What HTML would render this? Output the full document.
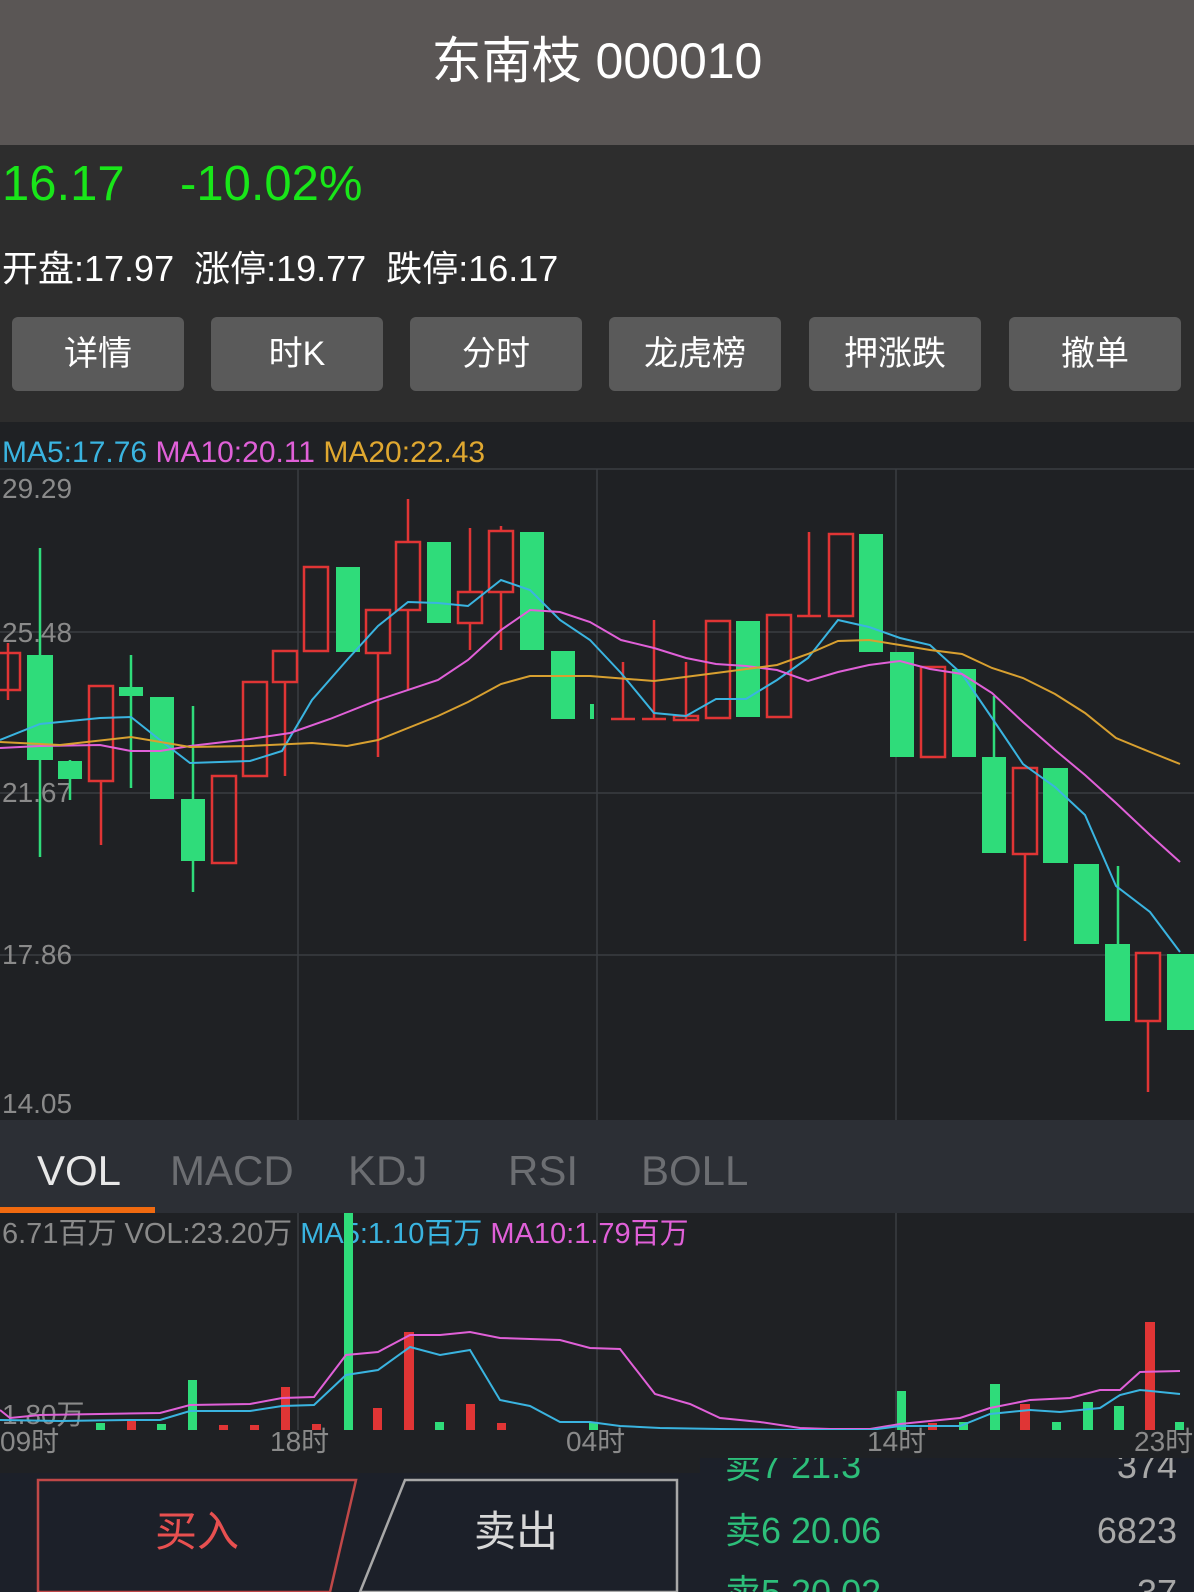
<!DOCTYPE html>
<html><head><meta charset="utf-8"><style>
*{margin:0;padding:0;box-sizing:border-box}
body{width:1194px;height:1592px;background:#2d2d2d;font-family:"Liberation Sans","Noto Sans CJK SC",sans-serif;overflow:hidden;position:relative}
.hdr{position:absolute;left:0;top:0;width:1194px;height:145px;background:#5a5655;color:#fff;font-size:50px;text-align:center;line-height:122px}
.t{position:absolute;white-space:nowrap}
.btn{position:absolute;top:317px;width:172px;height:74px;background:#5a5a5a;border-radius:6px;color:#fff;font-size:34px;text-align:center;line-height:74px}
</style></head><body>
<div class="hdr">东南枝 000010</div>
<div class="t" style="left:2px;top:156px;font-size:49px;color:#19e619">16.17</div>
<div class="t" style="left:180px;top:156px;font-size:49px;color:#19e619">-10.02%</div>
<div class="t" style="left:2px;top:240px;font-size:36px;color:#fff">开盘:17.97&nbsp; 涨停:19.77&nbsp; 跌停:16.17</div>
<div class="btn" style="left:12px">详情</div>
<div class="btn" style="left:211px">时K</div>
<div class="btn" style="left:410px">分时</div>
<div class="btn" style="left:609px">龙虎榜</div>
<div class="btn" style="left:809px">押涨跌</div>
<div class="btn" style="left:1009px">撤单</div>

<svg style="position:absolute;left:0;top:422px" width="1194" height="1170" viewBox="0 422 1194 1170" font-family="Liberation Sans, Noto Sans CJK SC, sans-serif">
<defs><clipPath id="bp"><rect x="0" y="1458" width="1194" height="134"/></clipPath></defs>
<rect x="0" y="422" width="1194" height="698" fill="#1f2124"/>
<rect x="0" y="1120" width="1194" height="93" fill="#2c2f35"/>
<rect x="0" y="1213" width="1194" height="260" fill="#1f2124"/>
<g stroke="#3a3d42" stroke-width="1.5">
<line x1="0" y1="469" x2="1194" y2="469"/><line x1="0" y1="632" x2="1194" y2="632"/><line x1="0" y1="793" x2="1194" y2="793"/><line x1="0" y1="955" x2="1194" y2="955"/>
<line x1="298" y1="469" x2="298" y2="1120"/><line x1="597" y1="469" x2="597" y2="1120"/><line x1="896" y1="469" x2="896" y2="1120"/>
<line x1="298" y1="1213" x2="298" y2="1430"/><line x1="597" y1="1213" x2="597" y2="1430"/><line x1="896" y1="1213" x2="896" y2="1430"/>
</g>
<text x="2" y="462" font-size="30"><tspan fill="#3ab4e0">MA5:17.76 </tspan><tspan fill="#e060d8">MA10:20.11 </tspan><tspan fill="#e0a830">MA20:22.43</tspan></text>
<g fill="#8a8a8a" font-size="28"><text x="2" y="498">29.29</text><text x="2" y="642">25.48</text><text x="2" y="802">21.67</text><text x="2" y="964">17.86</text><text x="2" y="1113">14.05</text></g>
<g stroke-width="2.5">
<line x1="8" y1="643" x2="8" y2="700" stroke="#e03535"/><rect x="-4" y="653" width="24" height="37" fill="none" stroke="#e03535"/>
<line x1="40" y1="548" x2="40" y2="857" stroke="#2fdc7a"/><rect x="27" y="655" width="26" height="105" fill="#2fdc7a"/>
<line x1="70" y1="760" x2="70" y2="800" stroke="#2fdc7a"/><rect x="58" y="761" width="24" height="18" fill="#2fdc7a"/>
<line x1="101" y1="686" x2="101" y2="845" stroke="#e03535"/><rect x="89" y="686" width="24" height="95" fill="#1f2124" stroke="#e03535"/>
<line x1="131" y1="655" x2="131" y2="788" stroke="#2fdc7a"/><rect x="119" y="687" width="24" height="9" fill="#2fdc7a"/>
<rect x="150" y="697" width="24" height="102" fill="#2fdc7a"/>
<line x1="193" y1="706" x2="193" y2="892" stroke="#2fdc7a"/><rect x="181" y="799" width="24" height="62" fill="#2fdc7a"/>
<rect x="212" y="776" width="24" height="87" fill="none" stroke="#e03535"/>
<rect x="243" y="682" width="24" height="94" fill="none" stroke="#e03535"/>
<line x1="285" y1="650" x2="285" y2="776" stroke="#e03535"/><rect x="273" y="651" width="24" height="31" fill="#1f2124" stroke="#e03535"/>
<rect x="304" y="567" width="24" height="84" fill="none" stroke="#e03535"/>
<rect x="336" y="567" width="24" height="85" fill="#2fdc7a"/>
<line x1="378" y1="610" x2="378" y2="757" stroke="#e03535"/><rect x="366" y="610" width="24" height="43" fill="#1f2124" stroke="#e03535"/>
<line x1="408" y1="499" x2="408" y2="690" stroke="#e03535"/><rect x="396" y="542" width="24" height="68" fill="#1f2124" stroke="#e03535"/>
<rect x="427" y="542" width="24" height="81" fill="#2fdc7a"/>
<line x1="470" y1="528" x2="470" y2="650" stroke="#e03535"/><rect x="458" y="592" width="24" height="31" fill="#1f2124" stroke="#e03535"/>
<line x1="501" y1="526" x2="501" y2="650" stroke="#e03535"/><rect x="489" y="531" width="24" height="61" fill="#1f2124" stroke="#e03535"/>
<rect x="520" y="532" width="24" height="118" fill="#2fdc7a"/>
<rect x="551" y="651" width="24" height="68" fill="#2fdc7a"/>
<rect x="590" y="704" width="4" height="15" fill="#2fdc7a"/>
<line x1="623" y1="662" x2="623" y2="719" stroke="#e03535"/><line x1="611" y1="719" x2="635" y2="719" stroke="#e03535"/>
<line x1="654" y1="620" x2="654" y2="719" stroke="#e03535"/><line x1="642" y1="719" x2="666" y2="719" stroke="#e03535"/>
<line x1="686" y1="662" x2="686" y2="720" stroke="#e03535"/><rect x="674" y="716" width="24" height="4" fill="none" stroke="#e03535"/>
<rect x="706" y="621" width="24" height="97" fill="none" stroke="#e03535"/>
<rect x="736" y="621" width="24" height="96" fill="#2fdc7a"/>
<rect x="767" y="615" width="24" height="102" fill="none" stroke="#e03535"/>
<line x1="809" y1="532" x2="809" y2="616" stroke="#e03535"/><line x1="797" y1="616" x2="821" y2="616" stroke="#e03535"/>
<rect x="829" y="534" width="24" height="82" fill="none" stroke="#e03535"/>
<rect x="859" y="534" width="24" height="118" fill="#2fdc7a"/>
<rect x="890" y="652" width="24" height="105" fill="#2fdc7a"/>
<rect x="921" y="667" width="24" height="90" fill="none" stroke="#e03535"/>
<rect x="952" y="669" width="24" height="88" fill="#2fdc7a"/>
<line x1="994" y1="696" x2="994" y2="757" stroke="#2fdc7a"/><rect x="982" y="757" width="24" height="96" fill="#2fdc7a"/>
<line x1="1025" y1="768" x2="1025" y2="941" stroke="#e03535"/><rect x="1013" y="768" width="24" height="86" fill="#1f2124" stroke="#e03535"/>
<rect x="1043" y="768" width="25" height="95" fill="#2fdc7a"/>
<rect x="1074" y="864" width="25" height="80" fill="#2fdc7a"/>
<line x1="1118" y1="866" x2="1118" y2="944" stroke="#2fdc7a"/><rect x="1105" y="944" width="25" height="77" fill="#2fdc7a"/>
<line x1="1148" y1="1021" x2="1148" y2="1092" stroke="#e03535"/><rect x="1136" y="953" width="24" height="68" fill="#1f2124" stroke="#e03535"/>
<rect x="1167" y="954" width="27" height="76" fill="#2fdc7a"/>
</g>
<polyline fill="none" stroke="#3ab4e0" stroke-width="2" points="0,740 40,724 100,718 131,717 160,740 190,763 250,761 282,751 312,700 347,660 378,626 408,602 438,603 468,606 501,580 530,590 560,620 590,640 621,673 654,713 686,716 716,699 746,699 777,680 808,658 838,620 869,627 900,638 930,645 962,674 992,718 1023,764 1055,787 1085,815 1116,886 1150,912 1180,952"/>
<polyline fill="none" stroke="#e060d8" stroke-width="2" points="0,748 40,746 100,745 131,751 160,751 190,746 250,739 290,733 330,719 378,700 438,680 468,660 501,630 530,610 560,612 590,622 621,640 654,648 686,658 716,664 746,666 777,670 808,681 838,672 869,665 900,661 930,669 962,674 992,693 1023,722 1055,750 1085,775 1116,803 1150,835 1180,862"/>
<polyline fill="none" stroke="#d8a030" stroke-width="2" points="0,742 60,745 131,737 190,747 250,746 312,743 347,746 378,740 438,716 468,702 501,684 530,676 590,676 654,681 716,673 777,665 808,654 838,641 869,640 900,645 930,650 962,654 992,668 1023,678 1055,694 1085,713 1116,738 1150,752 1180,764"/>

<text x="37" y="1185" font-size="42" fill="#e8e8e8">VOL</text>
<g font-size="42" fill="#6c6e72"><text x="170" y="1185">MACD</text><text x="348" y="1185">KDJ</text><text x="508" y="1185">RSI</text><text x="641" y="1185">BOLL</text></g>
<rect x="0" y="1207" width="155" height="6" fill="#f06a10"/>
<text x="2" y="1243" font-size="29"><tspan fill="#8a8a8a">6.71百万 VOL:23.20万 </tspan><tspan fill="#3ab4e0">MA5:1.10百万 </tspan><tspan fill="#e060d8">MA10:1.79百万</tspan></text>
<text x="2" y="1424" font-size="28" fill="#8a8a8a">1.80万</text>
<g>
<rect x="344" y="1213" width="9" height="217" fill="#2fdc7a"/>
<rect x="188" y="1380" width="9" height="50" fill="#2fdc7a"/>
<rect x="281" y="1387" width="9" height="43" fill="#e03535"/>
<rect x="404" y="1332" width="10" height="98" fill="#e03535"/>
<rect x="373" y="1408" width="9" height="22" fill="#e03535"/>
<rect x="466" y="1404" width="9" height="26" fill="#e03535"/>
<rect x="435" y="1422" width="9" height="8" fill="#2fdc7a"/>
<rect x="497" y="1423" width="9" height="7" fill="#e03535"/>
<rect x="589" y="1423" width="9" height="7" fill="#2fdc7a"/>
<rect x="127" y="1421" width="9" height="9" fill="#e03535"/>
<rect x="157" y="1424" width="9" height="6" fill="#2fdc7a"/>
<rect x="96" y="1423" width="9" height="7" fill="#2fdc7a"/>
<rect x="219" y="1425" width="9" height="5" fill="#e03535"/>
<rect x="250" y="1425" width="9" height="5" fill="#e03535"/>
<rect x="312" y="1424" width="9" height="6" fill="#e03535"/>
<rect x="897" y="1391" width="9" height="39" fill="#2fdc7a"/>
<rect x="990" y="1384" width="10" height="46" fill="#2fdc7a"/>
<rect x="1020" y="1404" width="10" height="26" fill="#e03535"/>
<rect x="1083" y="1402" width="10" height="28" fill="#2fdc7a"/>
<rect x="1114" y="1406" width="10" height="24" fill="#2fdc7a"/>
<rect x="1145" y="1322" width="10" height="108" fill="#e03535"/>
<rect x="1175" y="1422" width="9" height="8" fill="#2fdc7a"/>
<rect x="959" y="1422" width="9" height="8" fill="#2fdc7a"/>
<rect x="928" y="1423" width="9" height="7" fill="#e03535"/>
<rect x="1052" y="1422" width="9" height="8" fill="#2fdc7a"/>
</g>
<polyline fill="none" stroke="#e060d8" stroke-width="2" points="0,1410 10,1418 40,1415 100,1414 160,1413 190,1405 250,1404 282,1398 314,1397 346,1355 378,1352 410,1335 440,1335 470,1332 500,1338 560,1340 590,1348 620,1349 655,1394 690,1404 720,1418 760,1422 800,1428 830,1429 870,1429 900,1424 960,1418 990,1408 1030,1400 1070,1398 1100,1390 1120,1390 1140,1372 1180,1371"/>
<polyline fill="none" stroke="#3ab4e0" stroke-width="2" points="0,1420 60,1421 130,1420 160,1420 190,1411 250,1411 282,1406 314,1405 346,1375 378,1370 410,1347 440,1355 470,1350 500,1400 530,1406 560,1422 590,1422 620,1426 660,1428 720,1429 800,1430 870,1430 900,1426 960,1426 990,1414 1030,1410 1060,1412 1100,1408 1120,1395 1140,1390 1180,1394"/>
<rect x="0" y="1430" width="1194" height="28" fill="#1f2124"/>
<g font-size="28" fill="#8a8a8a"><text x="0" y="1451">09时</text><text x="270" y="1451">18时</text><text x="566" y="1451">04时</text><text x="867" y="1451">14时</text><text x="1134" y="1451">23时</text></g>

<rect x="0" y="1473" width="1194" height="119" fill="#1c2029"/>
<rect x="700" y="1458" width="494" height="15" fill="#1c2029"/>
<polygon points="38,1480 356,1480 330,1592 38,1592" fill="#1c2029" stroke="#c04848" stroke-width="2.5"/>
<polygon points="405,1480 677,1480 677,1592 360,1592" fill="#1c2029" stroke="#a8a8a8" stroke-width="2.5"/>
<text x="155" y="1546" font-size="42" fill="#e85050">买入</text>
<text x="474" y="1546" font-size="42" fill="#d8d8d8">卖出</text>
<g clip-path="url(#bp)">
<g font-size="36" fill="#2dbf7a"><text x="725" y="1478">卖7 21.3</text><text x="725" y="1543">卖6 20.06</text><text x="725" y="1605">卖5 20.02</text></g>
<g font-size="36" fill="#a8a8a8" text-anchor="end"><text x="1177" y="1478">374</text><text x="1177" y="1543">6823</text><text x="1177" y="1605">37</text></g>
</g>
</svg>
</body></html>
